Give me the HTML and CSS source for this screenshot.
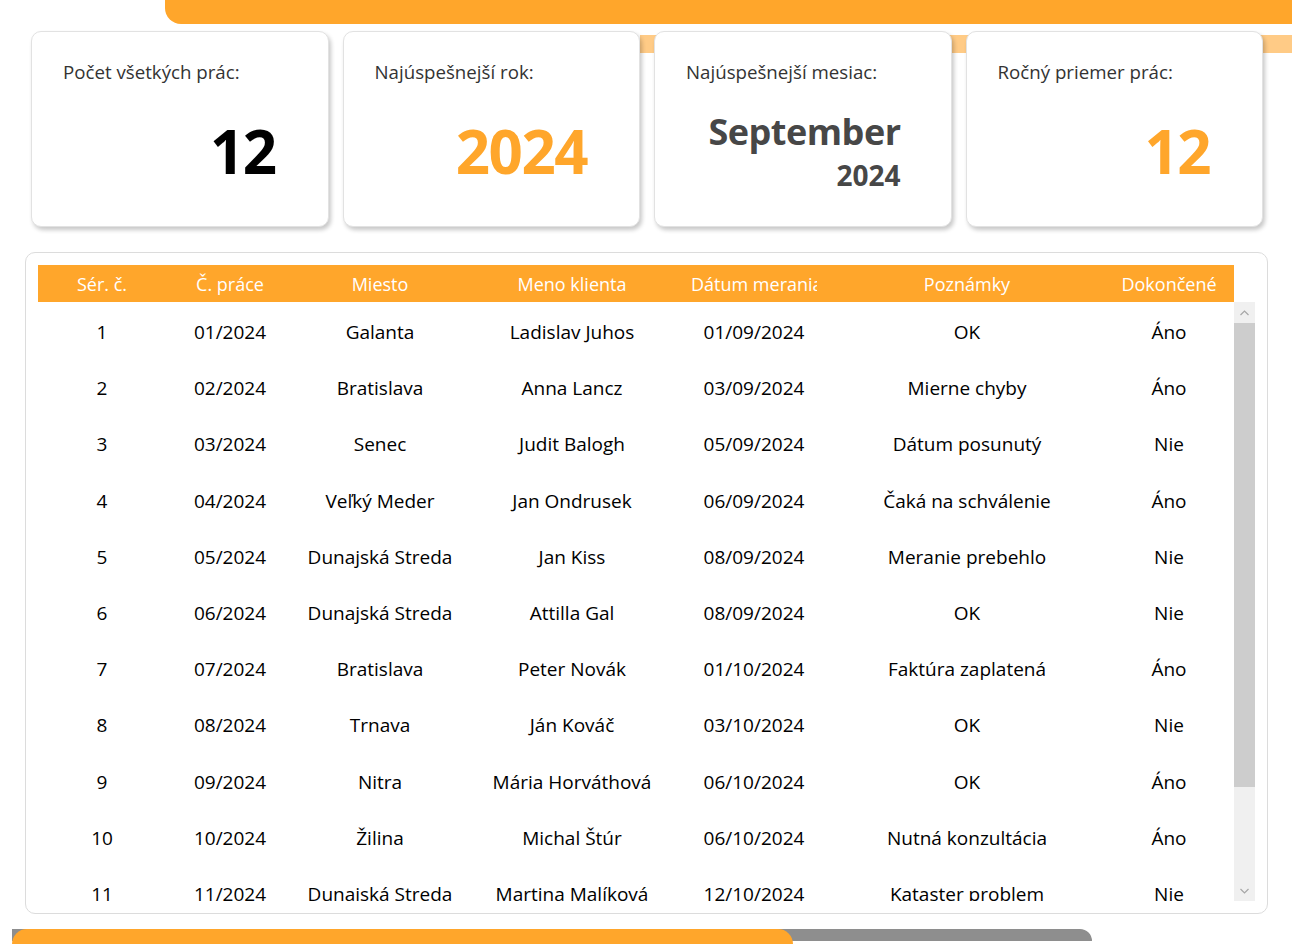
FILE: index.html
```html
<!DOCTYPE html>
<html lang="sk">
<head>
<meta charset="utf-8">
<title>Prehľad prác</title>
<link rel="stylesheet" href="styles.css">
</head>
<body>
<div class="topbar"></div>

<section class="stats">
  <div class="card">
    <div class="card-label">Počet všetkých prác:</div>
    <div class="card-value value-dark">12</div>
  </div>
  <div class="card">
    <div class="card-label">Najúspešnejší rok:</div>
    <div class="card-value value-orange">2024</div>
  </div>
  <div class="card">
    <div class="card-label">Najúspešnejší mesiac:</div>
    <div class="card-month">September</div>
    <div class="card-year">2024</div>
  </div>
  <div class="card">
    <div class="card-label">Ročný priemer prác:</div>
    <div class="card-value value-orange">12</div>
  </div>
</section>

<section class="panel">
  <div class="grid">
    <div class="thead cols">
      <div class="th"><span>Sér. č.</span></div>
      <div class="th"><span>Č. práce</span></div>
      <div class="th"><span>Miesto</span></div>
      <div class="th"><span>Meno klienta</span></div>
      <div class="th"><span>Dátum merania</span></div>
      <div class="th"><span>Poznámky</span></div>
      <div class="th"><span>Dokončené</span></div>
    </div>
    <div class="thead-gap"></div>
    <div class="tbody">
      <div class="row cols"><div>1</div><div>01/2024</div><div>Galanta</div><div>Ladislav Juhos</div><div>01/09/2024</div><div>OK</div><div>Áno</div></div>
      <div class="row cols"><div>2</div><div>02/2024</div><div>Bratislava</div><div>Anna Lancz</div><div>03/09/2024</div><div>Mierne chyby</div><div>Áno</div></div>
      <div class="row cols"><div>3</div><div>03/2024</div><div>Senec</div><div>Judit Balogh</div><div>05/09/2024</div><div>Dátum posunutý</div><div>Nie</div></div>
      <div class="row cols"><div>4</div><div>04/2024</div><div>Veľký Meder</div><div>Jan Ondrusek</div><div>06/09/2024</div><div>Čaká na schválenie</div><div>Áno</div></div>
      <div class="row cols"><div>5</div><div>05/2024</div><div>Dunajská Streda</div><div>Jan Kiss</div><div>08/09/2024</div><div>Meranie prebehlo</div><div>Nie</div></div>
      <div class="row cols"><div>6</div><div>06/2024</div><div>Dunajská Streda</div><div>Attilla Gal</div><div>08/09/2024</div><div>OK</div><div>Nie</div></div>
      <div class="row cols"><div>7</div><div>07/2024</div><div>Bratislava</div><div>Peter Novák</div><div>01/10/2024</div><div>Faktúra zaplatená</div><div>Áno</div></div>
      <div class="row cols"><div>8</div><div>08/2024</div><div>Trnava</div><div>Ján Kováč</div><div>03/10/2024</div><div>OK</div><div>Nie</div></div>
      <div class="row cols"><div>9</div><div>09/2024</div><div>Nitra</div><div>Mária Horváthová</div><div>06/10/2024</div><div>OK</div><div>Áno</div></div>
      <div class="row cols"><div>10</div><div>10/2024</div><div>Žilina</div><div>Michal Štúr</div><div>06/10/2024</div><div>Nutná konzultácia</div><div>Áno</div></div>
      <div class="row cols"><div>11</div><div>11/2024</div><div>Dunajská Streda</div><div>Martina Malíková</div><div>12/10/2024</div><div>Kataster problem</div><div>Nie</div></div>
    </div>
    <div class="scrollbar">
      <div class="sb-btn">
        <svg width="9" height="6" viewBox="0 0 9 6"><path d="M0.5 5 L4.5 1 L8.5 5" fill="none" stroke="#a6a6a6" stroke-width="1.2"/></svg>
      </div>
      <div class="sb-track"><div class="sb-thumb"></div></div>
      <div class="sb-btn">
        <svg width="9" height="6" viewBox="0 0 9 6"><path d="M0.5 1 L4.5 5 L8.5 1" fill="none" stroke="#a6a6a6" stroke-width="1.2"/></svg>
      </div>
    </div>
  </div>
</section>

<div class="progress">
  <div class="progress-track"></div>
  <div class="progress-fill"></div>
</div>
</body>
</html>
```

FILE: styles.css
```css
html, body {
  margin: 0;
  padding: 0;
  background: #ffffff;
}

body {
  width: 1292px;
  height: 944px;
  overflow: hidden;
  font-family: "Open Sans", "Noto Sans", "Liberation Sans", sans-serif;
  color: #000;
}

.topbar {
  margin-left: 165px;
  height: 24px;
  background: #ffa62b;
  border-bottom-left-radius: 16px;
}

/* ---------- stat cards ---------- */
.stats {
  position: relative;
  display: grid;
  grid-template-columns: repeat(4, 1fr);
  gap: 14px;
  margin: 7px 29px 0 31px;
}

.stats::before {
  content: "";
  position: absolute;
  left: 609px;
  right: -29px;
  top: 4px;
  height: 18px;
  background: #ffcb86;
}

.card {
  position: relative;
  height: 196px;
  box-sizing: border-box;
  background: #fff;
  border: 1px solid #e2e2e2;
  border-radius: 10px;
  box-shadow: 2px 3px 4px rgba(0, 0, 0, 0.22);
  padding: 27px 53px 0 31px;
  display: flex;
  flex-direction: column;
}

.card-label {
  font-size: 18.7px;
  line-height: 26px;
  color: #333;
  white-space: nowrap;
}

.card-value {
  margin-top: 31px;
  margin-right: -1px;
  text-align: right;
  font-weight: 700;
  font-size: 60px;
  line-height: 70px;
  letter-spacing: -1.5px;
}

.value-dark { color: #000; }
.value-orange { color: #ffa62b; }

.card-month {
  margin-top: 25px;
  margin-right: -3px;
  text-align: right;
  font-weight: 700;
  font-size: 36px;
  line-height: 44px;
  color: #474747;
  letter-spacing: -0.5px;
}

.card-year {
  margin-top: 5px;
  margin-right: -3px;
  text-align: right;
  font-weight: 700;
  font-size: 28px;
  line-height: 32px;
  color: #474747;
}

/* ---------- table panel ---------- */
.panel {
  margin: 25px 24px 0 25px;
  height: 662px;
  box-sizing: border-box;
  border: 1px solid #dcdcdc;
  border-radius: 10px;
  padding: 12px;
}

.grid {
  display: grid;
  grid-template-columns: 1196px 21px;
  grid-template-rows: 37px 599px;
}

.cols {
  display: grid;
  grid-template-columns: 128px 128px 172px 212px 152px 274px 130px;
  align-items: center;
  text-align: center;
}

.thead {
  background: #ffa62b;
  color: #fff;
  font-size: 18px;
}

.th {
  padding: 0 13px;
  white-space: nowrap;
}

.th span {
  display: block;
  overflow: hidden;
}

.tbody {
  overflow: hidden;
  padding-top: 2px;
  font-size: 19px;
  color: #000;
}

.row {
  height: 56.2px;
  white-space: nowrap;
}

.scrollbar {
  background: #f0f0f0;
  display: flex;
  flex-direction: column;
}

.sb-btn {
  height: 21px;
  display: flex;
  align-items: center;
  justify-content: center;
}

.sb-track {
  flex: 1;
}

.sb-thumb {
  height: 464px;
  background: #cdcdcd;
}

/* ---------- bottom progress ---------- */
.progress {
  position: relative;
  margin: 15px 0 0 12px;
  width: 1080px;
  height: 20px;
}

.progress-track {
  margin-top: 8px;
  height: 12px;
  background: #8e8e8e;
  border-top-right-radius: 14px;
}

.progress-fill {
  position: absolute;
  left: 0;
  top: 0;
  width: 781px;
  height: 20px;
  background: #ffa62b;
  border-top-left-radius: 15px;
  border-top-right-radius: 15px;
}
```
